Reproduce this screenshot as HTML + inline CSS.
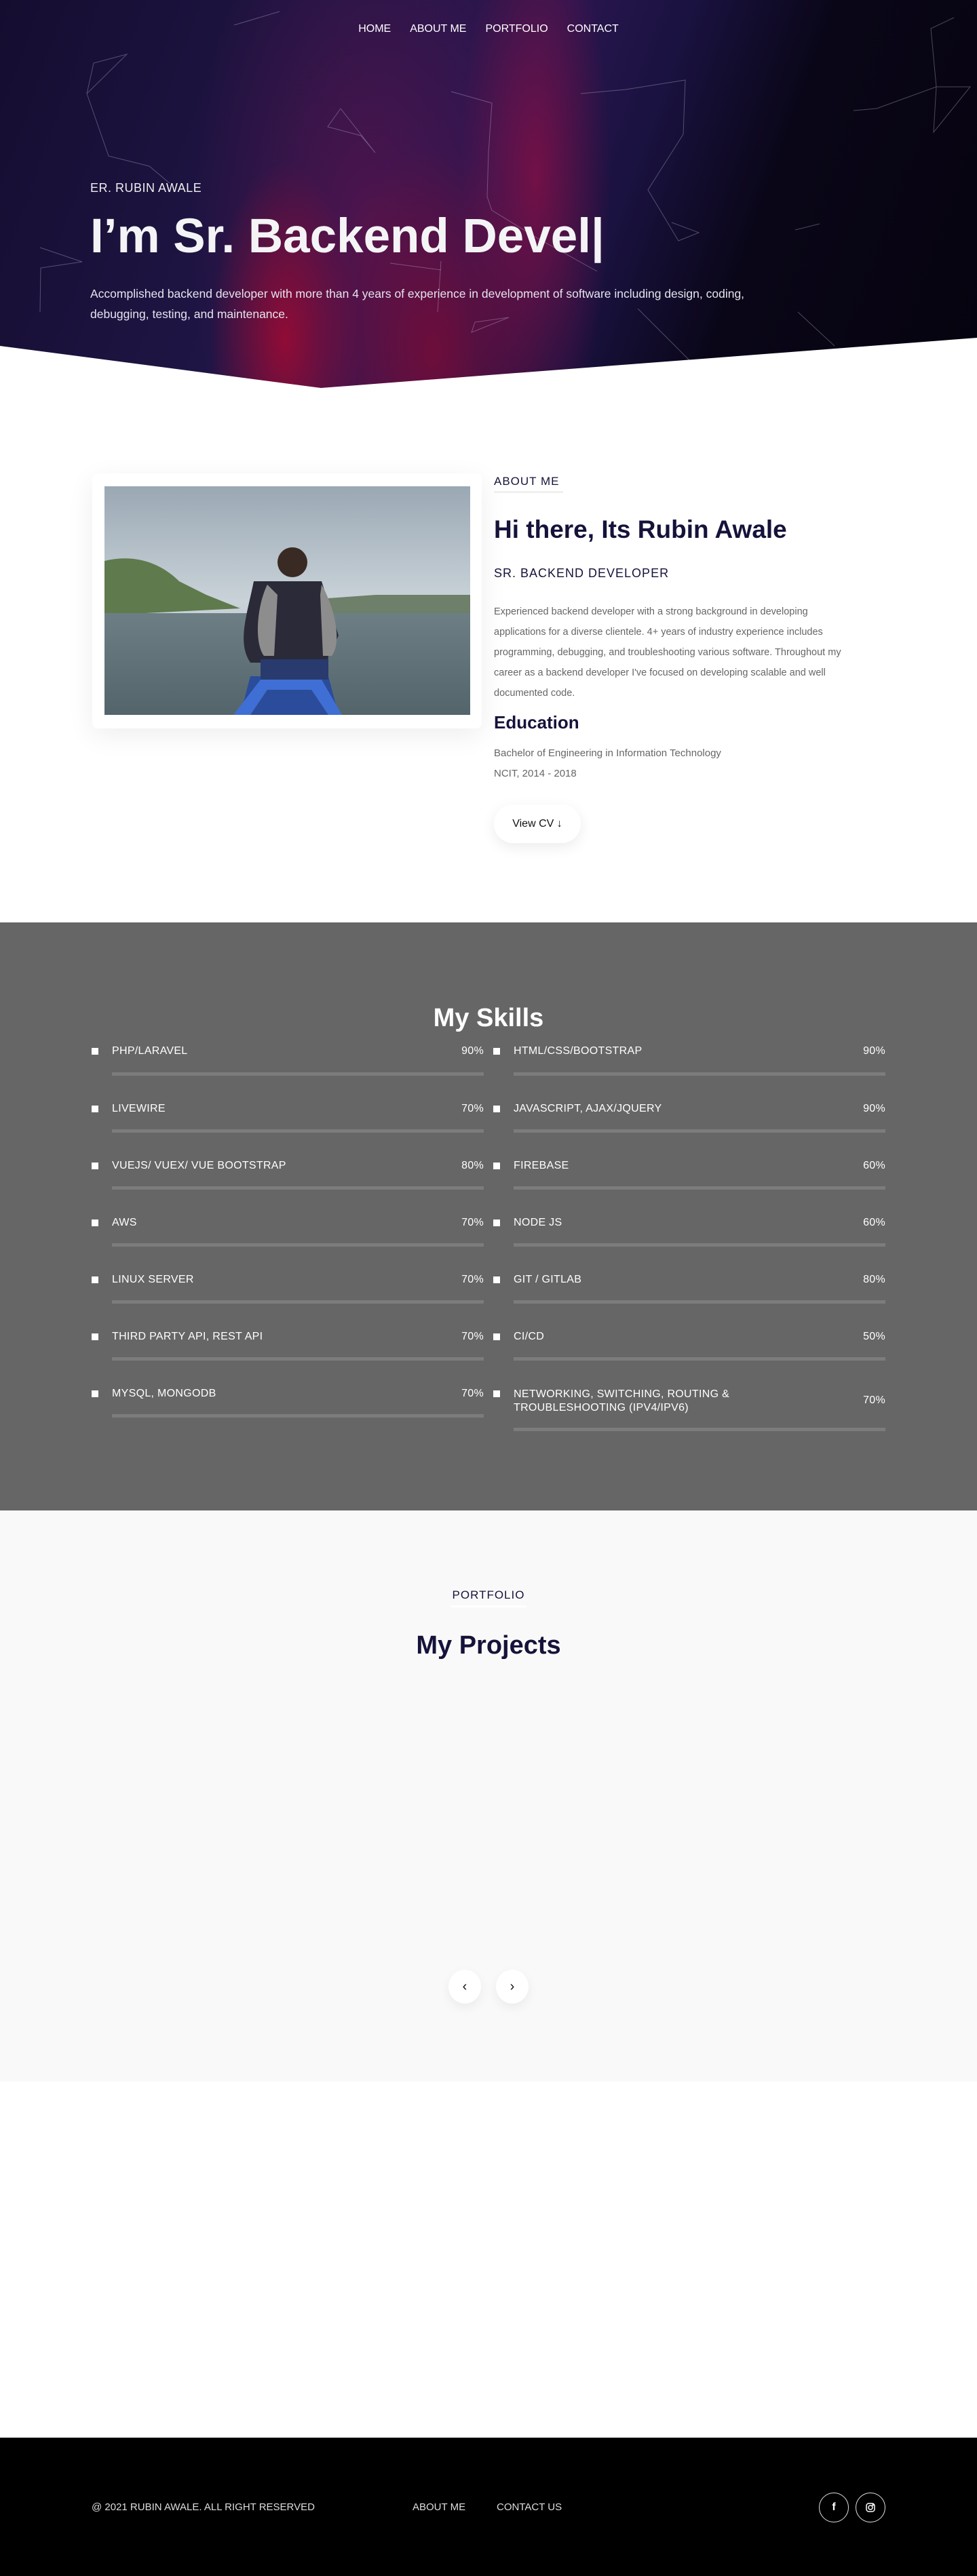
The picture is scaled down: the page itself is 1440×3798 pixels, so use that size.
<!DOCTYPE html>
<html><head><meta charset="utf-8"><style>
*{margin:0;padding:0;box-sizing:border-box}
body{width:1440px;height:3798px;font-family:"Liberation Sans",sans-serif;background:#fff;position:relative;overflow:hidden}
.abs{position:absolute}
#hero{position:absolute;left:0;top:0;width:1440px;height:575px;overflow:hidden;
background:
radial-gradient(ellipse 110px 260px at 420px 500px,rgba(160,10,50,.85),rgba(160,10,50,0) 100%),
radial-gradient(ellipse 170px 300px at 640px 520px,rgba(130,10,50,.7),rgba(130,10,50,0) 100%),
radial-gradient(ellipse 110px 420px at 790px 260px,rgba(140,15,70,.75),rgba(140,15,70,0) 100%),
radial-gradient(ellipse 260px 520px at 540px 330px,rgba(100,20,80,.65),rgba(100,20,80,0) 100%),
linear-gradient(110deg,#150d30 0%,#1f1545 30%,#2a1650 50%,#1a1240 62%,#0a0618 75%,#06030f 100%);}
#hero .cut{position:absolute;left:0;top:0;width:1440px;height:575px}
nav{position:absolute;top:34px;left:0;width:1440px;text-align:center;font-size:16px;color:#fff}
nav span{margin:0 14px}
.er{left:133px;top:267px;font-size:18px;color:#eee;letter-spacing:.5px}
.h1{left:133px;top:308px;font-size:71px;font-weight:bold;color:#f4f4f6}
.hp{left:133px;top:418px;width:1020px;font-size:17.5px;line-height:30px;color:#e6e4ee}
.card{left:136px;top:698px;width:574px;height:376px;background:#fff;border-radius:8px;box-shadow:0 10px 40px rgba(0,0,0,.07)}
.photo{left:154px;top:717px;width:539px;height:337px;overflow:hidden}
.navy{color:#15133a}
.lbl{font-size:17px;letter-spacing:1px}
.para{font-size:15px;line-height:30px;color:#666}
.skills{left:0;top:1360px;width:1440px;height:867px;background:#666}
.sk{position:absolute;color:#fff;font-size:16px;letter-spacing:.3px}
.bul{position:absolute;width:10px;height:10px;background:#fff}
.bar{position:absolute;height:5px;background:#7c7c7c}
.port{left:0;top:2227px;width:1440px;height:842px;background:#f9f9f9}
.arr{width:48px;height:50px;border-radius:50%;background:#fff;box-shadow:0 6px 16px rgba(0,0,0,.06);display:flex;align-items:center;justify-content:center;font-size:20px;color:#111}
footer{position:absolute;left:0;top:3594px;width:1440px;height:204px;background:#000;color:#ddd;font-size:15px}
.soc{position:absolute;top:81px;width:44px;height:44px;border:1px solid #ddd;border-radius:50%;display:flex;align-items:center;justify-content:center}
</style></head><body>
<div id="hero">
<svg class="cut" width="1440" height="575" viewBox="0 0 1440 575">
<g stroke="rgba(200,200,220,.35)" stroke-width="1" fill="none">
<polyline points="345,37 412,17"/><polyline points="128,138 187,80 138,93 128,138 160,230 220,245 250,270"/>
<polyline points="665,135 725,152 720,225 718,290 725,310 790,350 880,400"/>
<polyline points="502,160 483,187 532,200 553,225 502,160"/>
<polyline points="856,138 922,132 1010,118 1007,198 955,280 1000,355 1030,343 990,328"/>
<polyline points="1406,26 1372,42 1380,128 1376,195 1430,128 1380,128 1292,160 1258,163"/>
<polyline points="59,365 121,386 60,395 59,460"/><polyline points="650,385 645,460"/>
<polyline points="1172,339 1208,330"/><polyline points="700,475 750,468 695,490 700,475"/>
<polyline points="575,388 650,398"/><polyline points="940,455 1025,540"/>
<polyline points="1176,460 1230,510"/>
</g>
<polygon points="0,510 473,572 1440,498 1440,575 0,575" fill="#fff"/>
</svg>
<nav><span>HOME</span><span>ABOUT ME</span><span>PORTFOLIO</span><span>CONTACT</span></nav>
<div class="abs er">ER. RUBIN AWALE</div>
<div class="abs h1">I’m Sr. Backend Devel|</div>
<div class="abs hp">Accomplished backend developer with more than 4 years of experience in development of software including design, coding, debugging, testing, and maintenance.</div>
</div>

<div class="abs card"></div>
<div class="abs photo"><svg width="539" height="337" viewBox="0 0 539 337">
<defs><linearGradient id="sky" x1="0" y1="0" x2="0" y2="1"><stop offset="0" stop-color="#9aa8b4"/><stop offset=".5" stop-color="#c9d2d8"/><stop offset="1" stop-color="#b5c2c9"/></linearGradient>
<linearGradient id="wat" x1="0" y1="0" x2="0" y2="1"><stop offset="0" stop-color="#6d7f85"/><stop offset="1" stop-color="#53656b"/></linearGradient></defs>
<rect width="539" height="337" fill="url(#sky)"/>
<path d="M0,110 C40,100 80,110 110,140 L150,160 L200,180 L0,190Z" fill="#5f7a4d"/>
<path d="M330,165 L400,160 L539,160 L539,190 L330,190Z" fill="#6e7f6a"/>
<rect y="187" width="539" height="150" fill="url(#wat)"/>
<path d="M220,140 C210,190 195,230 215,260 L265,260 L270,330 L320,337 L330,250 L345,220 L320,140 Z" fill="#2a2a38"/>
<path d="M240,145 C225,175 220,230 235,250 L250,250 L255,160Z" fill="#8d8d8d"/>
<path d="M320,145 C340,180 350,230 335,250 L322,250 L318,160Z" fill="#8d8d8d"/>
<circle cx="277" cy="112" r="22" fill="#3a2a24"/>
<path d="M200,337 L215,280 L330,280 L345,337Z" fill="#2b4c9a"/>
<path d="M190,337 L230,285 L320,285 L350,337 L330,337 L305,300 L240,300 L215,337Z" fill="#3f6fd4"/>
<path d="M230,255 L330,255 L330,285 L230,285Z" fill="#283a6e"/>
</svg></div>

<div class="abs navy lbl" style="left:728px;top:700px">ABOUT ME</div>
<div class="abs" style="left:728px;top:724px;width:102px;height:3px;background:#f0f0f0"></div>
<div class="abs navy" style="left:728px;top:760px;font-size:37px;font-weight:bold">Hi there, Its Rubin Awale</div>
<div class="abs navy" style="left:728px;top:835px;font-size:18px;letter-spacing:1px">SR. BACKEND DEVELOPER</div>
<div class="abs para" style="left:728px;top:887px;width:620px;font-size:14.5px">Experienced backend developer with a strong background in developing<br>applications for a diverse clientele. 4+ years of industry experience includes<br>programming, debugging, and troubleshooting various software. Throughout my<br>career as a backend developer I've focused on developing scalable and well<br>documented code.</div>
<div class="abs navy" style="left:728px;top:1050px;font-size:26px;font-weight:bold">Education</div>
<div class="abs para" style="left:728px;top:1096px">Bachelor of Engineering in Information Technology<br>NCIT, 2014 - 2018</div>
<div class="abs" style="left:728px;top:1186px;width:128px;height:57px;border-radius:28px;background:#fff;box-shadow:0 6px 20px rgba(0,0,0,.08);display:flex;align-items:center;justify-content:center;font-size:16px;color:#111">View CV&nbsp;<b>&#8595;</b></div>

<div class="abs skills">
<div class="abs" style="left:0;top:120px;width:1440px;text-align:center;font-size:38px;font-weight:bold;color:#fff">My Skills</div>
</div>

<div class="abs port">
<div class="abs navy" style="left:0;top:115px;width:1440px;text-align:center;font-size:17px;letter-spacing:1px">PORTFOLIO</div>
<div class="abs" style="left:664px;top:140px;width:112px;height:3px;background:#fff"></div>
<div class="abs navy" style="left:0;top:178px;width:1440px;text-align:center;font-size:38px;font-weight:bold">My Projects</div>
<div class="abs arr" style="left:661px;top:677px">&#8249;</div>
<div class="abs arr" style="left:731px;top:677px">&#8250;</div>
</div>

<footer>
<div class="abs" style="left:135px;top:94px">@ 2021 RUBIN AWALE. ALL RIGHT RESERVED</div>
<div class="abs" style="left:608px;top:94px">ABOUT ME</div>
<div class="abs" style="left:732px;top:94px">CONTACT US</div>
<div class="soc" style="left:1207px"><b style="color:#fff;font-size:16px">f</b></div>
<div class="soc" style="left:1261px"><svg width="16" height="16" viewBox="0 0 16 16" fill="none" stroke="#fff" stroke-width="1.5"><rect x="2" y="2" width="12" height="12" rx="3.5"/><circle cx="8" cy="8" r="3"/><circle cx="11.6" cy="4.4" r=".6" fill="#fff"/></svg></div>
</footer>

<div class="sk" style="left:165px;top:1541px">PHP/LARAVEL</div><div class="sk" style="left:665px;width:48px;text-align:right;top:1541px">90%</div>
<div class="sk" style="left:757px;top:1541px">HTML/CSS/BOOTSTRAP</div><div class="sk" style="left:1257px;width:48px;text-align:right;top:1541px">90%</div>
<div class="sk" style="left:165px;top:1626px">LIVEWIRE</div><div class="sk" style="left:665px;width:48px;text-align:right;top:1626px">70%</div>
<div class="sk" style="left:757px;top:1626px">JAVASCRIPT, AJAX/JQUERY</div><div class="sk" style="left:1257px;width:48px;text-align:right;top:1626px">90%</div>
<div class="sk" style="left:165px;top:1710px">VUEJS/ VUEX/ VUE BOOTSTRAP</div><div class="sk" style="left:665px;width:48px;text-align:right;top:1710px">80%</div>
<div class="sk" style="left:757px;top:1710px">FIREBASE</div><div class="sk" style="left:1257px;width:48px;text-align:right;top:1710px">60%</div>
<div class="sk" style="left:165px;top:1794px">AWS</div><div class="sk" style="left:665px;width:48px;text-align:right;top:1794px">70%</div>
<div class="sk" style="left:757px;top:1794px">NODE JS</div><div class="sk" style="left:1257px;width:48px;text-align:right;top:1794px">60%</div>
<div class="sk" style="left:165px;top:1878px">LINUX SERVER</div><div class="sk" style="left:665px;width:48px;text-align:right;top:1878px">70%</div>
<div class="sk" style="left:757px;top:1878px">GIT / GITLAB</div><div class="sk" style="left:1257px;width:48px;text-align:right;top:1878px">80%</div>
<div class="sk" style="left:165px;top:1962px">THIRD PARTY API, REST API</div><div class="sk" style="left:665px;width:48px;text-align:right;top:1962px">70%</div>
<div class="sk" style="left:757px;top:1962px">CI/CD</div><div class="sk" style="left:1257px;width:48px;text-align:right;top:1962px">50%</div>
<div class="sk" style="left:165px;top:2046px">MYSQL, MONGODB</div><div class="sk" style="left:665px;width:48px;text-align:right;top:2046px">70%</div>
<div class="sk" style="left:757px;top:2046px;line-height:20px">NETWORKING, SWITCHING, ROUTING &amp;<br>TROUBLESHOOTING (IPV4/IPV6)</div><div class="sk" style="left:1257px;width:48px;text-align:right;top:2056px">70%</div>

<div class="bul" style="left:135px;top:1545px"></div><div class="bul" style="left:727px;top:1545px"></div>
<div class="bul" style="left:135px;top:1630px"></div><div class="bul" style="left:727px;top:1630px"></div>
<div class="bul" style="left:135px;top:1714px"></div><div class="bul" style="left:727px;top:1714px"></div>
<div class="bul" style="left:135px;top:1798px"></div><div class="bul" style="left:727px;top:1798px"></div>
<div class="bul" style="left:135px;top:1882px"></div><div class="bul" style="left:727px;top:1882px"></div>
<div class="bul" style="left:135px;top:1966px"></div><div class="bul" style="left:727px;top:1966px"></div>
<div class="bul" style="left:135px;top:2050px"></div><div class="bul" style="left:727px;top:2050px"></div>

<div class="bar" style="left:165px;width:548px;top:1581px"></div><div class="bar" style="left:757px;width:548px;top:1581px"></div>
<div class="bar" style="left:165px;width:548px;top:1665px"></div><div class="bar" style="left:757px;width:548px;top:1665px"></div>
<div class="bar" style="left:165px;width:548px;top:1749px"></div><div class="bar" style="left:757px;width:548px;top:1749px"></div>
<div class="bar" style="left:165px;width:548px;top:1833px"></div><div class="bar" style="left:757px;width:548px;top:1833px"></div>
<div class="bar" style="left:165px;width:548px;top:1917px"></div><div class="bar" style="left:757px;width:548px;top:1917px"></div>
<div class="bar" style="left:165px;width:548px;top:2001px"></div><div class="bar" style="left:757px;width:548px;top:2001px"></div>
<div class="bar" style="left:165px;width:548px;top:2085px"></div><div class="bar" style="left:757px;width:548px;top:2105px"></div>
</body></html>
